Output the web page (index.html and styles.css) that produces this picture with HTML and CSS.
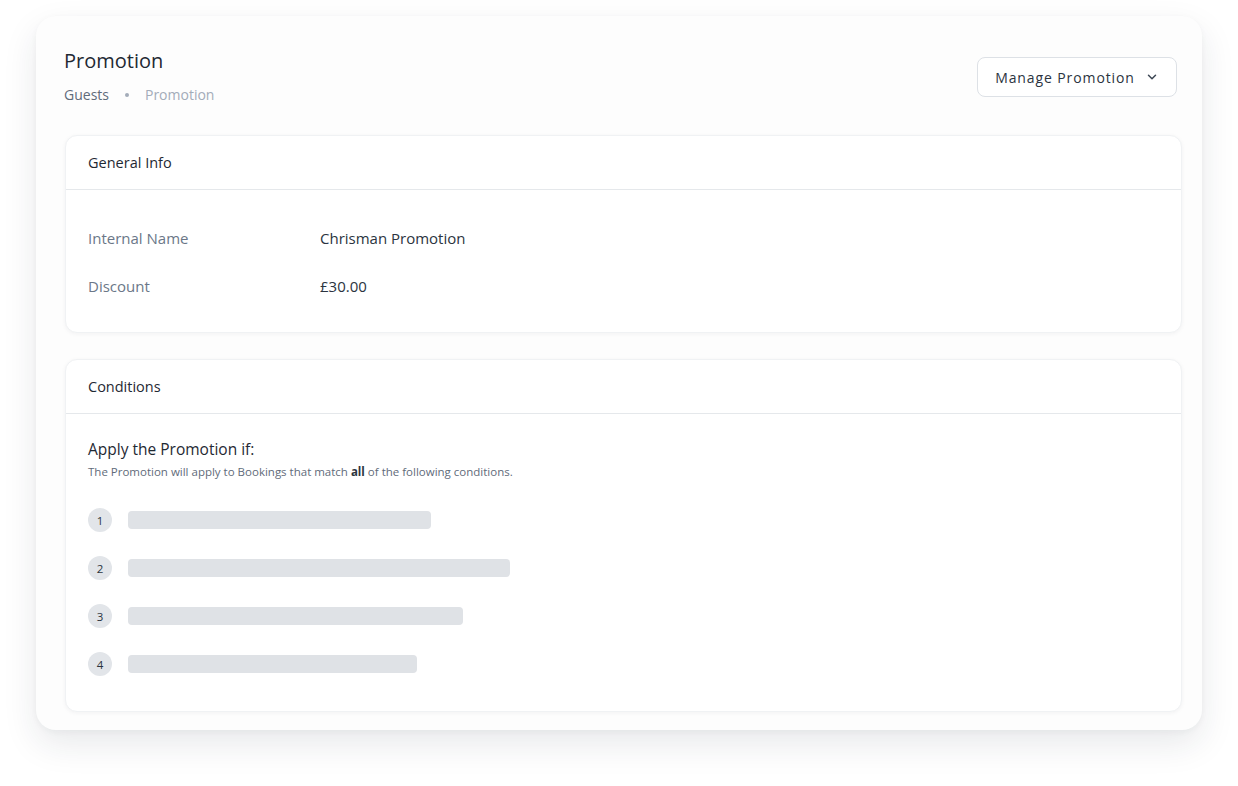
FILE: index.html
```html
<!DOCTYPE html>
<html lang="en">
<head>
<meta charset="utf-8">
<title>Promotion</title>
<link rel="stylesheet" href="styles.css">
</head>
<body>
<div class="page">
  <div class="panel">
    <div class="top">
      <div class="heading">
        <h1 class="title">Promotion</h1>
        <div class="crumbs">
          <span class="crumb">Guests</span>
          <span class="crumb-dot"></span>
          <span class="crumb crumb-current">Promotion</span>
        </div>
      </div>
      <button class="manage">Manage Promotion
        <svg class="chev" width="14" height="14" viewBox="0 0 14 14"><path d="M3.5 5.25 7 8.75 10.5 5.25" fill="none" stroke="#3d4754" stroke-width="1.5" stroke-linecap="round" stroke-linejoin="round"/></svg>
      </button>
    </div>

    <section class="card">
      <div class="card-head">General Info</div>
      <div class="card-body info">
        <div class="row"><span class="label">Internal Name</span><span class="value">Chrisman Promotion</span></div>
        <div class="row"><span class="label">Discount</span><span class="value">£30.00</span></div>
      </div>
    </section>

    <section class="card">
      <div class="card-head">Conditions</div>
      <div class="card-body cond">
        <div class="cond-title">Apply the Promotion if:</div>
        <div class="cond-sub">The Promotion will apply to Bookings that match <b>all</b> of the following conditions.</div>
        <ul class="list">
          <li class="item"><span class="num">1</span><span class="bar" style="width:303px"></span></li>
          <li class="item"><span class="num">2</span><span class="bar" style="width:382px"></span></li>
          <li class="item"><span class="num">3</span><span class="bar" style="width:335px"></span></li>
          <li class="item"><span class="num">4</span><span class="bar" style="width:289px"></span></li>
        </ul>
      </div>
    </section>
  </div>
</div>
</body>
</html>
```

FILE: styles.css
```css
* { box-sizing: border-box; }
html, body { margin: 0; padding: 0; background: #ffffff; }
body {
  font-family: "Open Sans", "Lato", "Liberation Sans", sans-serif;
  color: #1f2933;
  width: 1238px;
  height: 786px;
  overflow: hidden;
}
.page { padding: 16px 36px 0 36px; }
.panel {
  background: #fdfdfd;
  border-radius: 20px;
  height: 714px;
  padding: 28px 20px 0 28px;
  box-shadow: 0 14px 34px rgba(30, 40, 60, 0.10), 0 2px 6px rgba(30, 40, 60, 0.04);
}
.top {
  display: flex;
  justify-content: space-between;
  align-items: flex-start;
  padding-right: 5px;
  height: 91px;
}
.title {
  margin: 0;
  font-size: 20px;
  font-weight: 500;
  line-height: 28px;
  color: #1f2933;
  padding-top: 3px;
}
.crumbs {
  display: flex;
  align-items: center;
  margin-top: 10px;
  font-size: 14px;
  line-height: 20px;
}
.crumb { color: #5f6b7a; }
.crumb-current { color: #a3acb9; }
.crumb-dot {
  width: 4px; height: 4px; border-radius: 50%;
  background: #a3acb9;
  margin: 0 16px;
}
.manage {
  margin-top: 13px;
  height: 40px;
  width: 200px;
  display: flex;
  align-items: center;
  justify-content: center;
  gap: 10px;
  background: #ffffff;
  border: 1px solid #dde1e6;
  border-radius: 8px;
  font-family: inherit;
  font-size: 14px;
  font-weight: 500;
  letter-spacing: 0.9px;
  color: #2b3440;
  padding: 0 14px;
}
.chev { display: block; }
.card {
  background: #ffffff;
  border: 1px solid #f0f2f4;
  border-radius: 12px;
  margin: 0 0 26px 1px;
  box-shadow: 0 1px 4px rgba(30, 40, 60, 0.05);
}
.card-head {
  height: 54px;
  display: flex;
  align-items: center;
  padding: 0 22px;
  font-size: 14.5px;
  font-weight: 500;
  color: #1f2933;
  border-bottom: 1px solid #e5e8eb;
}
.card-body { padding: 24px 22px 22px; }
.row {
  display: flex;
  align-items: center;
  height: 48px;
  font-size: 15px;
}
.label { width: 232px; color: #6b7788; }
.value { color: #2b3440; }
.cond { padding-top: 24px; padding-bottom: 35px; }
.cond-title { font-size: 15.5px; font-weight: 500; color: #1f2933; line-height: 22px; }
.cond-sub { font-size: 11.5px; color: #5f6b7a; line-height: 16px; margin-top: 4px; }
.cond-sub b { color: #2b3440; font-weight: 700; }
.list { list-style: none; margin: 28px 0 0; padding: 0; display: flex; flex-direction: column; gap: 24px; }
.item { display: flex; align-items: center; height: 24px; gap: 16px; }
.num {
  width: 24px; height: 24px; border-radius: 50%;
  background: #e2e5e9;
  display: flex; align-items: center; justify-content: center;
  font-size: 11.5px; color: #2b3440;
}
.bar { height: 18px; border-radius: 4px; background: #dfe2e6; }
```
